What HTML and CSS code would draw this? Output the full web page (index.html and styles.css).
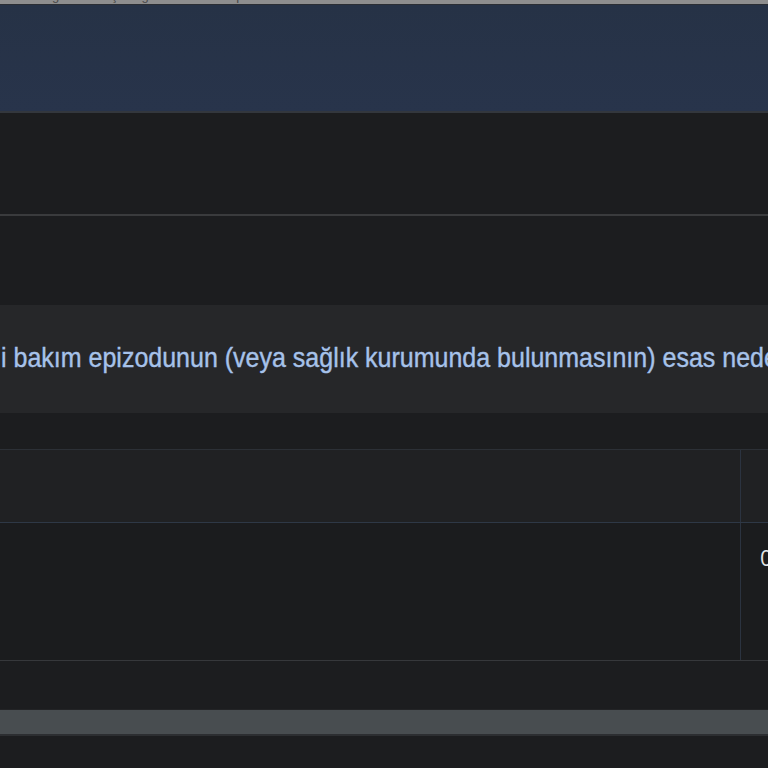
FILE: index.html
```html
<!DOCTYPE html>
<html lang="tr">
<head>
<meta charset="utf-8">
<title>Bakım epizodu</title>
<link rel="stylesheet" href="styles.css">
</head>
<body>
<div class="page">
  <div class="topstrip"><span>Sağlık kuruluşu bilgileri ve bakım epizodu</span></div>
  <div class="banner"></div>
  <div class="section s1"></div>
  <div class="divider"></div>
  <div class="section s2"></div>
  <div class="panel">
    <p class="panel-text">i bakım epizodunun (veya sağlık kurumunda bulunmasının) esas nedeni</p>
  </div>
  <div class="gap"></div>
  <div class="table">
    <div class="row head">
      <div class="cell main"></div>
      <div class="cell side"></div>
    </div>
    <div class="row body-row">
      <div class="cell main"></div>
      <div class="cell side"><span class="num">0</span></div>
    </div>
  </div>
  <div class="gap2"></div>
  <div class="scrollbar"></div>
  <div class="rest"></div>
</div>
</body>
</html>
```
FILE: styles.css
```css
html, body {
  margin: 0;
  padding: 0;
  background: #1c1d1f;
}
.page {
  width: 768px;
  height: 768px;
  overflow: hidden;
  font-family: "Liberation Sans", Arial, sans-serif;
  display: flex;
  flex-direction: column;
}
.topstrip {
  height: 4px;
  flex: none;
  overflow: hidden;
  background: #8e8e8e;
  border-bottom: 1px solid #2b2e34;
  padding-left: 36px;
}
.topstrip span {
  display: block;
  margin-top: -11px;
  font-size: 13px;
  line-height: 14px;
  color: #4a4a4a;
  white-space: nowrap;
}
.banner {
  height: 106px;
  flex: none;
  background: linear-gradient(#263246, #28344b);
  border-bottom: 2px solid #33373d;
}
.section {
  flex: none;
  background: #1c1d1f;
}
.s1 { height: 101px; }
.divider {
  height: 2px;
  flex: none;
  background: #3a3b3d;
}
.s2 { height: 89px; }
.panel {
  height: 108px;
  flex: none;
  background: #262729;
  display: flex;
  align-items: center;
  overflow: hidden;
}
.panel-text {
  margin: -4px 0 0 0;
  padding-left: 1px;
  font-size: 25px;
  line-height: 30px;
  color: #a6c2ea;
  white-space: nowrap;
  -webkit-text-stroke: 0.35px #a6c2ea;
  transform: scaleY(1.12);
  transform-origin: 0 50%;
}
.gap {
  height: 36px;
  flex: none;
}
.table {
  flex: none;
  border-top: 1px solid #2c3036;
  border-bottom: 1px solid #36383b;
}
.row {
  display: flex;
}
.head {
  height: 72px;
  background: #202123;
  border-bottom: 1px solid #2e3846;
}
.body-row {
  height: 137px;
  background: #1b1c1e;
}
.cell.main {
  width: 740px;
  flex: none;
  border-right: 1px solid #2b3340;
}
.cell.side {
  flex: 1;
  padding: 19px 0 0 19px;
  overflow: hidden;
}
.num {
  font-family: "Open Sans", "Liberation Sans", sans-serif;
  font-size: 22px;
  line-height: 30px;
  color: #e4e4e4;
}
.gap2 {
  height: 48px;
  flex: none;
  border-bottom: 1px solid #222325;
}
.scrollbar {
  height: 24px;
  flex: none;
  background: #484d50;
  border-bottom: 2px solid #2c2e31;
}
.rest {
  flex: 1;
  background: #1c1d1f;
}
```
